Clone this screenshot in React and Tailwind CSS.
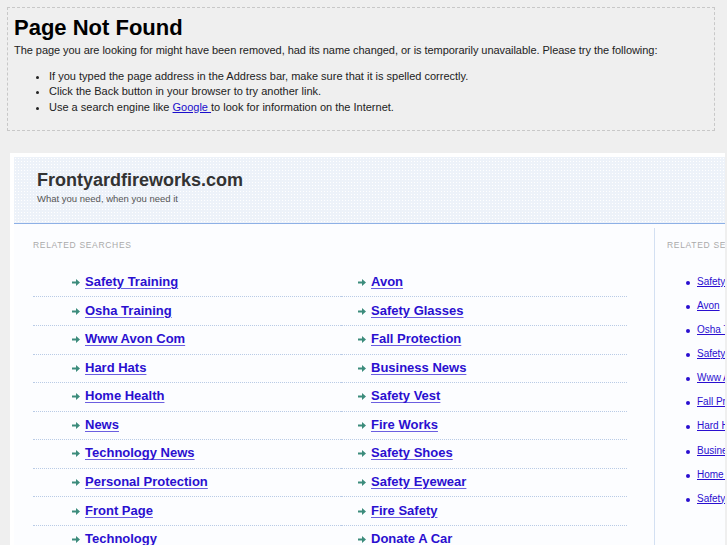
import React from 'react';

const leftLinks = [
  'Safety Training',
  'Osha Training',
  'Www Avon Com',
  'Hard Hats',
  'Home Health',
  'News',
  'Technology News',
  'Personal Protection',
  'Front Page',
  'Technology'];

const rightLinks = [
  'Avon',
  'Safety Glasses',
  'Fall Protection',
  'Business News',
  'Safety Vest',
  'Fire Works',
  'Safety Shoes',
  'Safety Eyewear',
  'Fire Safety',
  'Donate A Car'];

const sideLinks = [
  'Safety Training',
  'Avon',
  'Osha Training',
  'Safety Glasses',
  'Www Avon Com',
  'Fall Protection',
  'Hard Hats',
  'Business News',
  'Home Health',
  'Safety Vest'];

function Arrow() {
  return (
    <svg width="8" height="7" viewBox="0 0 8 7" className="shrink-0">
      <path d="M0 2.5h4V0l4 3.5L4 7V4.5H0z" fill="#3c8c7c" />
    </svg>);
}

function LinkColumn({ items, width, indent }) {
  return (
    <ul className={width}>
      {items.map((item) =>
      <li
        key={item}
        className={`h-[28.55px] flex items-center gap-[5px] border-b border-dotted border-[#b9cbe6] ${indent}`}>
          <Arrow />
          <a href="#" className="text-[13px] font-bold text-[#2a0fd0] underline underline-offset-2 decoration-[#6b5ee0] leading-none -mt-[2px]">
            {item}
          </a>
        </li>
      )}
    </ul>);
}

export default function App() {
  return (
    <div className="min-h-[545px] bg-[#efefef] text-[#111] overflow-hidden" style={{ fontFamily: '"Liberation Sans", Arial, sans-serif' }}>
      {/* error notice */}
      <div className="pt-[7px] px-[7px] w-[722px]">
        <div className="border border-dashed border-[#c8c8c8] px-[6px] pt-[6px] pb-[15px]">
          <h1 className="text-[22px] font-bold leading-[28px] text-black">Page Not Found</h1>
          <p className="text-[11px] leading-[14px] mt-[1px] text-[#222] tracking-[-0.05px]">
            The page you are looking for might have been removed, had its name changed, or is temporarily unavailable. Please try the following:
          </p>
          <ul className="list-disc pl-[35px] mt-[12px] text-[11px] leading-[15.3px] text-[#222]">
            <li>If you typed the page address in the Address bar, make sure that it is spelled correctly.</li>
            <li>Click the Back button in your browser to try another link.</li>
            <li>
              Use a search engine like <a href="#" className="text-[#1a0dcc] underline">Google </a> to look for information on the Internet.
            </li>
          </ul>
        </div>
      </div>

      {/* parked domain frame */}
      <div className="mt-[22px] ml-[10px] w-[715px] bg-white pt-[4px] pl-[4px] overflow-hidden">
        <div className="w-[760px]">
          <div className="h-[67px] bg-[#edf2f9] border-b border-[#8db0e6] pl-[23px] pt-[12px] bg-[radial-gradient(#ffffff_0.6px,transparent_0.8px)] bg-[length:3px_3px]">
            <div className="text-[18px] font-bold text-[#333] leading-[22px]">Frontyardfireworks.com</div>
            <div className="text-[9.5px] text-[#555] mt-[2px] leading-[12px]">What you need, when you need it</div>
          </div>

          <div className="flex bg-[#fcfdff] min-h-[330px]">
            <div className="w-[640px] pl-[19px] pt-[16px]">
              <div className="text-[8.5px] tracking-[0.08em] text-[#aaa] leading-[10px]">RELATED SEARCHES</div>
              <div className="flex w-[594px] mt-[19px]">
                <LinkColumn items={leftLinks} width="w-[308px]" indent="pl-[39px]" />
                <LinkColumn items={rightLinks} width="flex-1" indent="pl-[17px]" />
              </div>
            </div>
            <div className="mt-[4px] border-l border-[#d3e0f2] pl-[12px] pt-[12px] flex-1">
              <div className="text-[8.5px] tracking-[0.08em] text-[#aaa] leading-[10px] whitespace-nowrap">RELATED SEARCHES</div>
              <ul className="mt-[26px] pl-[19px]">
                {sideLinks.map((item) =>
                <li key={item} className="h-[24.1px] flex items-start gap-[7px] whitespace-nowrap">
                    <span className="w-[4px] h-[4px] rounded-full bg-[#2a0fd0] mt-[5px] shrink-0" />
                    <a href="#" className="text-[10px] leading-[12px] text-[#2a0fd0] underline">{item}</a>
                  </li>
                )}
              </ul>
            </div>
          </div>
        </div>
      </div>
    </div>);
}
